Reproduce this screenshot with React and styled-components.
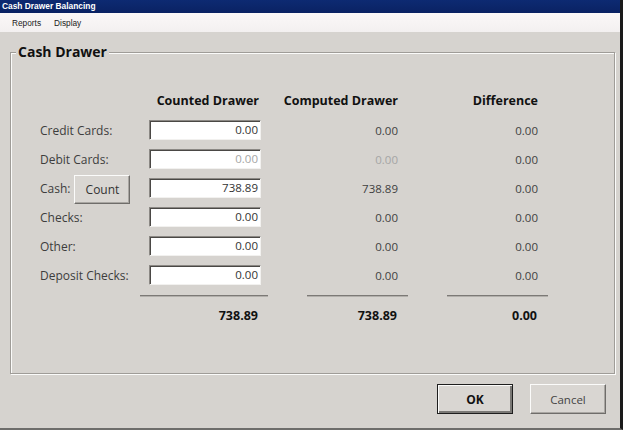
import React from "react";
import styled, { createGlobalStyle, css } from "styled-components";

const Global = createGlobalStyle`
  html, body { margin: 0; padding: 0; background: #d5d2ce; }
  * { box-sizing: border-box; }
`;

const UI = `"Open Sans", "Noto Sans", "Liberation Sans", sans-serif`;

const Window = styled.div`
  width: 623px;
  height: 430px;
  display: flex;
  flex-direction: column;
  background: #d6d3cf;
  border-right: 3px solid #1a1a1a;
  border-bottom: 2px solid #6e6d6b;
  overflow: hidden;
`;

const TitleBar = styled.div`
  height: 13px;
  flex: none;
  background: linear-gradient(#0d2a72, #0a2263);
  color: #fff;
  font: bold 8.4px "Liberation Sans", Arial, sans-serif;
  line-height: 13px;
  padding-left: 2px;
  white-space: nowrap;
`;

const MenuBar = styled.div`
  height: 19px;
  flex: none;
  display: flex;
  align-items: center;
  gap: 13px;
  padding-left: 12px;
  background: linear-gradient(#fbf8f8, #f3f0f0);
`;

const MenuItem = styled.span`
  font: 8.3px "Liberation Sans", Arial, sans-serif;
  color: #1a1a1a;
`;

const Body = styled.div`
  flex: 1;
  display: flex;
  flex-direction: column;
  padding: 10px 5px 0 10px;
`;

const Group = styled.fieldset`
  margin: 0;
  height: 332px;
  padding: 28px 0 0 0;
  border: 1px solid #9f9c98;
  box-shadow: 1px 1px 0 #fbfbfa, inset 1px 1px 0 #fbfbfa;
`;

const Legend = styled.legend`
  margin-left: 5px;
  padding: 0 2px;
  font: bold 14px ${UI};
  line-height: 20px;
  color: #111;
  background: #d6d3cf;
`;

const Stack = styled.div`
  display: flex;
  flex-direction: column;
`;

const Columns = styled.div`
  display: grid;
  grid-template-columns: 138px 112px 139px 140px;
  grid-template-rows: ${(p) => p.$h || 20}px;
  align-items: center;
  height: ${(p) => p.$h || 20}px;
  margin-top: ${(p) => p.$mt || 0}px;
`;

const Header = styled.div`
  grid-column: ${(p) => p.$col};
  font: bold 12.5px ${UI};
  color: #111;
  text-align: right;
  padding-right: 2px;
  white-space: nowrap;
`;

const LabelCell = styled.div`
  display: flex;
  align-items: center;
  gap: 4px;
  padding-left: 29px;
  height: 20px;
  overflow: visible;
`;

const Label = styled.span`
  font: 12px ${UI};
  color: #3d3d3d;
  white-space: nowrap;
`;

const raised = css`
  background: #d9d6d2;
  border: 1px solid;
  border-color: #fbfbfa #6f6d6a #6f6d6a #fbfbfa;
  box-shadow: inset -1px -1px 0 #a9a6a2;
`;

const CountButton = styled.button`
  ${raised};
  flex: none;
  width: 56px;
  height: 29px;
  margin: -3px 0 -6px;
  padding: 0;
  font: 12px ${UI};
  color: #333;
`;

const Input = styled.div`
  height: 20px;
  background: #fff;
  border-top: 1px solid #8b8884;
  border-left: 1px solid #8b8884;
  border-right: 1px solid #f2f1ef;
  border-bottom: 1px solid #f2f1ef;
  box-shadow: inset 1px 1px 0 #4a4845;
  font: 11.5px ${UI};
  line-height: 18px;
  text-align: right;
  padding-right: 2px;
  color: ${(p) => (p.$disabled ? "#a5a5a5" : "#333")};
`;

const Value = styled.div`
  font: 11.5px ${UI};
  text-align: right;
  padding-right: 2px;
  color: ${(p) => (p.$disabled ? "#a5a5a5" : "#3f3f3f")};
`;

const Total = styled.div`
  font: bold 12.5px ${UI};
  color: #111;
  text-align: right;
  padding-right: 3px;
`;

const Rule = styled.div`
  height: 2px;
  background: #7c7976;
  border-bottom: 1px solid #b2afab;
  margin-left: ${(p) => p.$ml}px;
  margin-right: ${(p) => p.$mr}px;
`;

const ButtonBar = styled.div`
  display: flex;
  justify-content: flex-end;
  gap: 17px;
  margin-top: 10px;
  padding-right: 9px;
`;

const DialogButton = styled.button`
  ${raised};
  width: 76px;
  height: 30px;
  padding: 0;
  font: ${(p) => (p.$default ? "bold 12px" : "11.5px")} ${UI};
  color: ${(p) => (p.$default ? "#111" : "#444")};
  ${(p) =>
    p.$default &&
    css`
      border: 1px solid #1e1e1e;
      box-shadow: inset 1px 1px 0 #fbfbfa, inset -2px -2px 0 #7a7875;
    `}
`;

const rows = [
  { label: "Credit Cards:", counted: "0.00", computed: "0.00", diff: "0.00" },
  { label: "Debit Cards:", counted: "0.00", computed: "0.00", diff: "0.00", disabled: true },
  { label: "Cash:", counted: "738.89", computed: "738.89", diff: "0.00", count: true },
  { label: "Checks:", counted: "0.00", computed: "0.00", diff: "0.00" },
  { label: "Other:", counted: "0.00", computed: "0.00", diff: "0.00" },
  { label: "Deposit Checks:", counted: "0.00", computed: "0.00", diff: "0.00" },
];

export default function App() {
  return (
    <>
      <Global />
      <Window>
        <TitleBar>Cash Drawer Balancing</TitleBar>
        <MenuBar>
          <MenuItem>Reports</MenuItem>
          <MenuItem>Display</MenuItem>
        </MenuBar>
        <Body>
          <Group>
            <Legend>Cash Drawer</Legend>
            <Stack>
              <Columns>
                <Header $col={2}>Counted Drawer</Header>
                <Header $col={3}>Computed Drawer</Header>
                <Header $col={4}>Difference</Header>
              </Columns>
              {rows.map((r, i) => (
                <Columns key={r.label} $mt={i === 0 ? 10 : 9}>
                  <LabelCell>
                    <Label>{r.label}</Label>
                    {r.count && <CountButton>Count</CountButton>}
                  </LabelCell>
                  <Input $disabled={r.disabled}>{r.counted}</Input>
                  <Value $disabled={r.disabled}>{r.computed}</Value>
                  <Value>{r.diff}</Value>
                </Columns>
              ))}
              <Columns $h={3} $mt={9}>
                <span />
                <Rule $ml={-9} $mr={-7} />
                <Rule $ml={46} $mr={-8} />
                <Rule $ml={47} $mr={-8} />
              </Columns>
              <Columns $mt={8}>
                <span />
                <Total>738.89</Total>
                <Total>738.89</Total>
                <Total>0.00</Total>
              </Columns>
            </Stack>
          </Group>
          <ButtonBar>
            <DialogButton $default>OK</DialogButton>
            <DialogButton>Cancel</DialogButton>
          </ButtonBar>
        </Body>
      </Window>
    </>
  );
}
